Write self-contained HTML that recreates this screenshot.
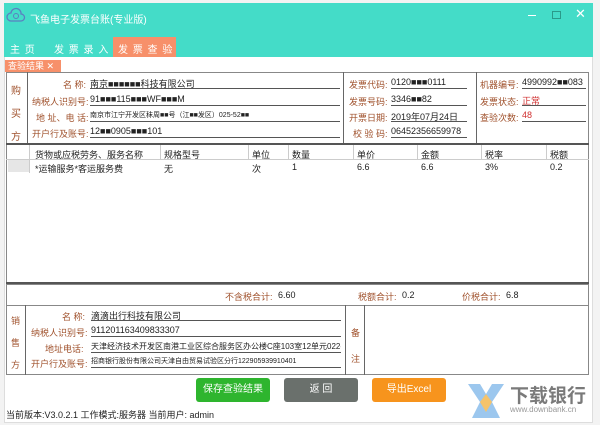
<!DOCTYPE html>
<html><head><meta charset="utf-8"><style>
*{margin:0;padding:0;box-sizing:border-box}
body{width:600px;height:425px;background:#f3f3f3;font-family:"Liberation Sans","Noto Sans CJK SC",sans-serif;font-size:9px;color:#222;position:relative;overflow:hidden}
.a{position:absolute}
.win{left:4px;top:3px;width:589px;height:420px;background:#fff;border:1px solid #ddd}
.hd{left:4px;top:3px;width:589px;height:54px;background:#44dcc8}
.lb{color:#a0522d}
.ul{border-bottom:1px solid #555}
.box{border:1px solid #666}
.tab{color:#fff;font-size:10px;top:41px;letter-spacing:1px}
.btn{top:378px;height:24px;border-radius:3px;color:#fff;font-size:10px;text-align:center;line-height:24px}
</style></head><body>
<div class="a win"></div>
<div class="a hd"></div>
<svg class="a" style="left:6px;top:6px" width="20" height="18" viewBox="0 0 20 18"><path d="M5 15a4 4 0 0 1 0-8 5 5 0 0 1 10 1 3.5 3.5 0 0 1 0 7z" fill="none" stroke="#5b7fc0" stroke-width="1.3"/><circle cx="10" cy="10" r="2.5" fill="none" stroke="#5b7fc0"/></svg>
<div class="a" style="left:30px;top:11px;color:#fff;font-size:10px">飞鱼电子发票台账(专业版)</div>
<div class="a" style="left:528px;top:15px;width:8px;height:1px;background:#fff"></div>
<div class="a" style="left:552px;top:11px;width:9px;height:8px;border:1px solid #2a9a8a"></div>
<div class="a" style="left:575px;top:6px;color:#fff;font-size:13px">✕</div>
<div class="a" style="left:113px;top:37px;width:63px;height:20px;background:#f7906a"></div>
<div class="a tab" style="left:10px">主 页</div>
<div class="a tab" style="left:54px">发 票 录 入</div>
<div class="a tab" style="left:118px">发 票 查 验</div>
<div class="a" style="left:5px;top:60px;width:56px;height:12px;background:#f7906a;color:#fff;font-size:9px;padding-left:3px;line-height:12px">查验结果 ✕</div>
<div class="a box" style="left:6px;top:72px;width:583px;height:211px;border-color:#888"></div>
<div class="a" style="left:6px;top:72px;width:22px;height:72px;border-right:1px solid #666"></div>
<div class="a lb" style="left:11px;top:80px;font-size:10px;line-height:23px">购<br>买<br>方</div>
<div class="a" style="left:343px;top:72px;width:134px;height:72px;border-left:1px solid #666;border-right:1px solid #666"></div>
<div class="a" style="left:6px;top:143px;width:583px;height:2px;background:#555"></div>
<div class="a lb" style="left:63px;top:78px">名 称:</div><div class="a ul" style="left:90px;top:77px;width:250px;height:12px">南京■■■■■■科技有限公司</div>
<div class="a lb" style="left:32px;top:95px">纳税人识别号:</div><div class="a ul" style="left:90px;top:94px;width:250px;height:12px">91■■■115■■■WF■■■M</div>
<div class="a lb" style="left:36px;top:111px">地 址、电 话:</div><div class="a ul" style="left:90px;top:110px;width:250px;height:12px;font-size:7px">南京市江宁开发区秣周■■号（江■■发区）025-52■■</div>
<div class="a lb" style="left:32px;top:127px">开户行及账号:</div><div class="a ul" style="left:90px;top:126px;width:250px;height:12px">12■■0905■■■101</div>
<div class="a lb" style="left:349px;top:78px">发票代码:</div><div class="a ul" style="left:391px;top:77px;width:76px;height:12px">0120■■■0111</div>
<div class="a lb" style="left:349px;top:95px">发票号码:</div><div class="a ul" style="left:391px;top:94px;width:76px;height:12px">3346■■82</div>
<div class="a lb" style="left:349px;top:111px">开票日期:</div><div class="a ul" style="left:391px;top:110px;width:76px;height:12px">2019年07月24日</div>
<div class="a lb" style="left:353px;top:127px">校 验 码:</div><div class="a ul" style="left:391px;top:126px;width:76px;height:12px;overflow:hidden">06452356659978</div>
<div class="a lb" style="left:480px;top:78px">机器编号:</div><div class="a ul" style="left:522px;top:77px;width:64px;height:12px">4990992■■083</div>
<div class="a lb" style="left:480px;top:95px">发票状态:</div><div class="a ul" style="left:522px;top:94px;width:64px;height:12px;color:#d03030">正常</div>
<div class="a lb" style="left:480px;top:111px">查验次数:</div><div class="a ul" style="left:522px;top:110px;width:64px;height:12px;color:#d03030">48</div>
<div class="a" style="left:6px;top:145px;width:583px;height:15px;border-bottom:1px solid #ccc"></div>
<div class="a" style="left:8px;top:160px;width:21px;height:12px;background:#e6e6e6"></div>
<div class="a" style="left:29px;top:145px;width:1px;height:28px;background:#ccc"></div>
<div class="a" style="left:160px;top:145px;width:1px;height:15px;background:#ccc"></div>
<div class="a" style="left:248px;top:145px;width:1px;height:15px;background:#ccc"></div>
<div class="a" style="left:288px;top:145px;width:1px;height:15px;background:#ccc"></div>
<div class="a" style="left:353px;top:145px;width:1px;height:15px;background:#ccc"></div>
<div class="a" style="left:417px;top:145px;width:1px;height:15px;background:#ccc"></div>
<div class="a" style="left:481px;top:145px;width:1px;height:15px;background:#ccc"></div>
<div class="a" style="left:546px;top:145px;width:1px;height:15px;background:#ccc"></div>
<div class="a" style="left:35px;top:148px">货物或应税劳务、服务名称</div><div class="a" style="left:35px;top:162px">*运输服务*客运服务费</div>
<div class="a" style="left:164px;top:148px">规格型号</div><div class="a" style="left:164px;top:162px">无</div>
<div class="a" style="left:252px;top:148px">单位</div><div class="a" style="left:252px;top:162px">次</div>
<div class="a" style="left:292px;top:148px">数量</div><div class="a" style="left:292px;top:162px">1</div>
<div class="a" style="left:357px;top:148px">单价</div><div class="a" style="left:357px;top:162px">6.6</div>
<div class="a" style="left:421px;top:148px">金额</div><div class="a" style="left:421px;top:162px">6.6</div>
<div class="a" style="left:485px;top:148px">税率</div><div class="a" style="left:485px;top:162px">3%</div>
<div class="a" style="left:550px;top:148px">税额</div><div class="a" style="left:550px;top:162px">0.2</div>
<div class="a" style="left:6px;top:282px;width:583px;height:2px;background:#555"></div>
<div class="a box" style="left:6px;top:284px;width:583px;height:91px;border-color:#888"></div>
<div class="a" style="left:6px;top:305px;width:583px;height:1px;background:#888"></div>
<div class="a lb" style="left:225px;top:290px">不含税合计:</div><div class="a" style="left:278px;top:290px">6.60</div>
<div class="a lb" style="left:358px;top:290px">税额合计:</div><div class="a" style="left:402px;top:290px">0.2</div>
<div class="a lb" style="left:462px;top:290px">价税合计:</div><div class="a" style="left:506px;top:290px">6.8</div>
<div class="a" style="left:6px;top:305px;width:20px;height:70px;border-right:1px solid #666"></div>
<div class="a lb" style="left:11px;top:310px;line-height:22px">销<br>售<br>方</div>
<div class="a" style="left:345px;top:305px;width:20px;height:70px;border-left:1px solid #666;border-right:1px solid #666"></div>
<div class="a lb" style="left:351px;top:320px;line-height:26px">备<br>注</div>
<div class="a lb" style="left:62px;top:310px">名 称:</div><div class="a ul" style="left:91px;top:309px;width:250px;height:12px">滴滴出行科技有限公司</div>
<div class="a lb" style="left:31px;top:326px">纳税人识别号:</div><div class="a ul" style="left:91px;top:325px;width:250px;height:12px">911201163409833307</div>
<div class="a lb" style="left:45px;top:342px">地址电话:</div><div class="a ul" style="left:91px;top:341px;width:250px;height:12px;font-size:8px;overflow:hidden;white-space:nowrap">天津经济技术开发区南港工业区综合服务区办公楼C座103室12单元022-5</div>
<div class="a lb" style="left:31px;top:357px">开户行及账号:</div><div class="a ul" style="left:91px;top:356px;width:250px;height:12px;font-size:7px">招商银行股份有限公司天津自由贸易试验区分行122905939910401</div>
<div class="a btn" style="left:196px;width:74px;background:#2eb52e">保存查验结果</div>
<div class="a btn" style="left:284px;width:74px;background:#6a706c">返 回</div>
<div class="a btn" style="left:372px;width:74px;background:#f7941d">导出Excel</div>
<div class="a" style="left:6px;top:408px;font-size:9px">当前版本:V3.0.2.1 工作模式:服务器 当前用户: admin</div>
<svg class="a" style="left:466px;top:380px" width="40" height="40" viewBox="0 0 40 40"><path d="M2 4h12l6 10 6-10h12L26 22l8 16H6l8-16z" fill="#9cc7ee"/><path d="M14 22l6-8 6 8-6 10z" fill="#f5c36b"/></svg>
<div class="a" style="left:510px;top:381px;font-size:19px;color:#7a7a7a;font-weight:bold">下载银行</div>
<div class="a" style="left:510px;top:405px;font-size:8px;color:#999">www.downbank.cn</div>
</body></html>
